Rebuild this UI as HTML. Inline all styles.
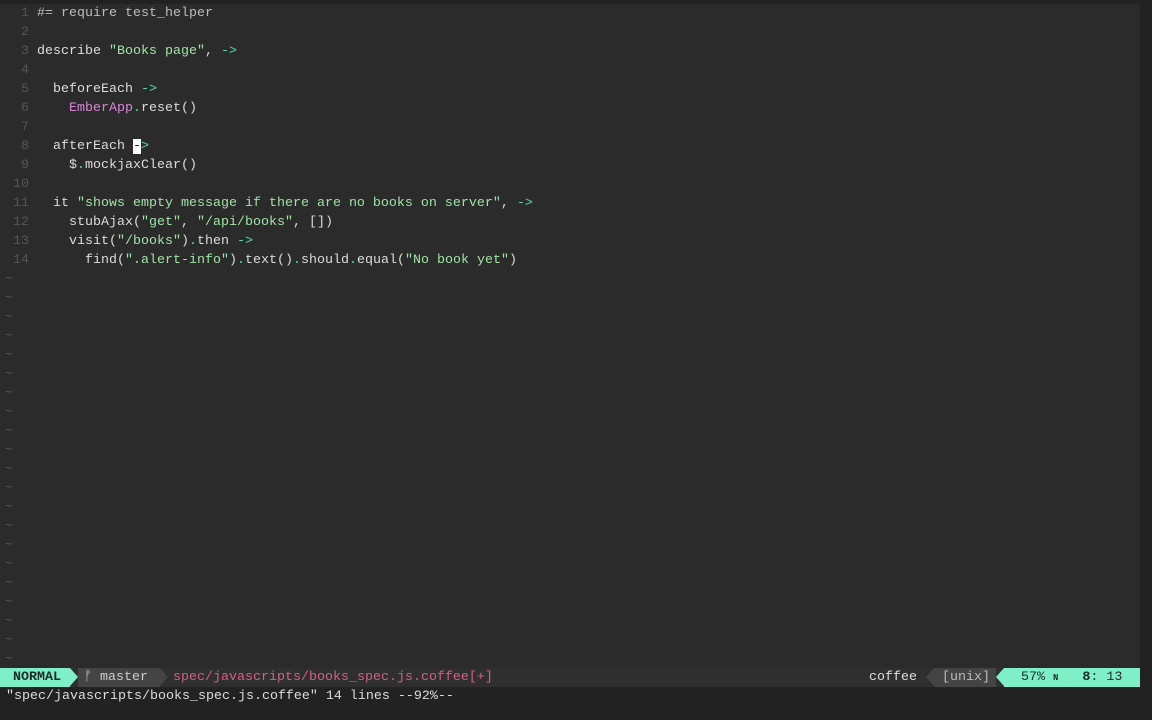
<!DOCTYPE html>
<html><head><style>
body{margin:0;width:1152px;height:720px;background:#222;overflow:hidden;font-family:"Liberation Mono",monospace;font-size:13.33px;}
#ed{position:absolute;left:0;top:4px;width:1140px;height:664px;background:#2b2b2b;}
.l{position:absolute;left:0;height:19px;line-height:19px;white-space:pre;color:#ddd;margin-top:1px;}
.n{display:inline-block;width:29px;text-align:right;color:#555;margin-right:8px;}
.t{color:#555;position:absolute;left:5px;}
.s{color:#9fe3a5}.a{color:#5fd7b0}.p{color:#d787d7}.d{color:#5fd7b0}.c{color:#888}
#sl{position:absolute;left:0;top:668px;width:1140px;height:19px;line-height:19px;background:#2f2f2f;white-space:pre;}
#sl span{position:absolute;top:0;height:19px;}
#cmd{position:absolute;left:6px;top:687px;line-height:19px;color:#ddd;white-space:pre;}
</style></head><body>
<div id="ed">
<div class="l" style="top:-1px"><span class="n">1</span><span class="c" style="color:#bbb">#= require test_helper</span></div>
<div class="l" style="top:18px"><span class="n">2</span></div>
<div class="l" style="top:37px"><span class="n">3</span>describe <span class="s">"Books page"</span>, <span class="a">-&gt;</span></div>
<div class="l" style="top:56px"><span class="n">4</span></div>
<div class="l" style="top:75px"><span class="n">5</span>  beforeEach <span class="a">-&gt;</span></div>
<div class="l" style="top:94px"><span class="n">6</span>    <span class="p">EmberApp</span><span class="d">.</span>reset()</div>
<div class="l" style="top:113px"><span class="n">7</span></div>
<div class="l" style="top:132px"><span class="n">8</span>  afterEach <span style="background:#fff;color:#222">-</span><span class="a">&gt;</span></div>
<div class="l" style="top:151px"><span class="n">9</span>    $<span class="d">.</span>mockjaxClear()</div>
<div class="l" style="top:170px"><span class="n">10</span></div>
<div class="l" style="top:189px"><span class="n">11</span>  it <span class="s">"shows empty message if there are no books on server"</span>, <span class="a">-&gt;</span></div>
<div class="l" style="top:208px"><span class="n">12</span>    stubAjax(<span class="s">"get"</span>, <span class="s">"/api/books"</span>, [])</div>
<div class="l" style="top:227px"><span class="n">13</span>    visit(<span class="s">"/books"</span>)<span class="d">.</span>then <span class="a">-&gt;</span></div>
<div class="l" style="top:246px"><span class="n">14</span>      find(<span class="s">".alert-info"</span>)<span class="d">.</span>text()<span class="d">.</span>should<span class="d">.</span>equal(<span class="s">"No book yet"</span>)</div>
<div id="tl"></div>
</div>
<div id="sl">
<span style="left:0;width:70px;background:#7fefc8;color:#1c2b26;font-weight:bold;padding-left:13px;box-sizing:border-box">NORMAL</span>
<span style="left:70px;width:0;height:0;border-top:9.5px solid transparent;border-bottom:9.5px solid transparent;border-left:8px solid #7fefc8"></span>
<span style="left:78px;width:82px;background:#444;color:#ccc;padding-left:6px;box-sizing:border-box">ᚠ master</span>
<span style="left:160px;width:0;border-top:9.5px solid transparent;border-bottom:9.5px solid transparent;border-left:8px solid #444;height:0"></span>
<span style="left:173px;color:#d75f87">spec/javascripts/books_spec.js.coffee[+]</span>
<span style="left:869px;color:#ddd">coffee</span>
<span style="left:926px;width:0;height:0;border-top:9.5px solid transparent;border-bottom:9.5px solid transparent;border-right:8px solid #444"></span>
<span style="left:934px;width:62px;background:#444;color:#bbb;padding-left:8px;box-sizing:border-box">[unix]</span>
<span style="left:996px;width:0;height:0;border-top:9.5px solid transparent;border-bottom:9.5px solid transparent;border-right:8px solid #7fefc8"></span>
<span style="left:1004px;width:136px;background:#7fefc8;color:#1c2b26;padding-left:17px;box-sizing:border-box">57% <b style="font-size:9px">N</b>   <b>8</b>: 13</span>
</div>
<div id="cmd">"spec/javascripts/books_spec.js.coffee" 14 lines --92%--</div>
<script>
var t='';for(var i=0;i<21;i++)t+='<div class="l t" style="top:'+(265+19*i)+'px">~</div>';document.getElementById('tl').innerHTML=t;
</script>
</body></html>
